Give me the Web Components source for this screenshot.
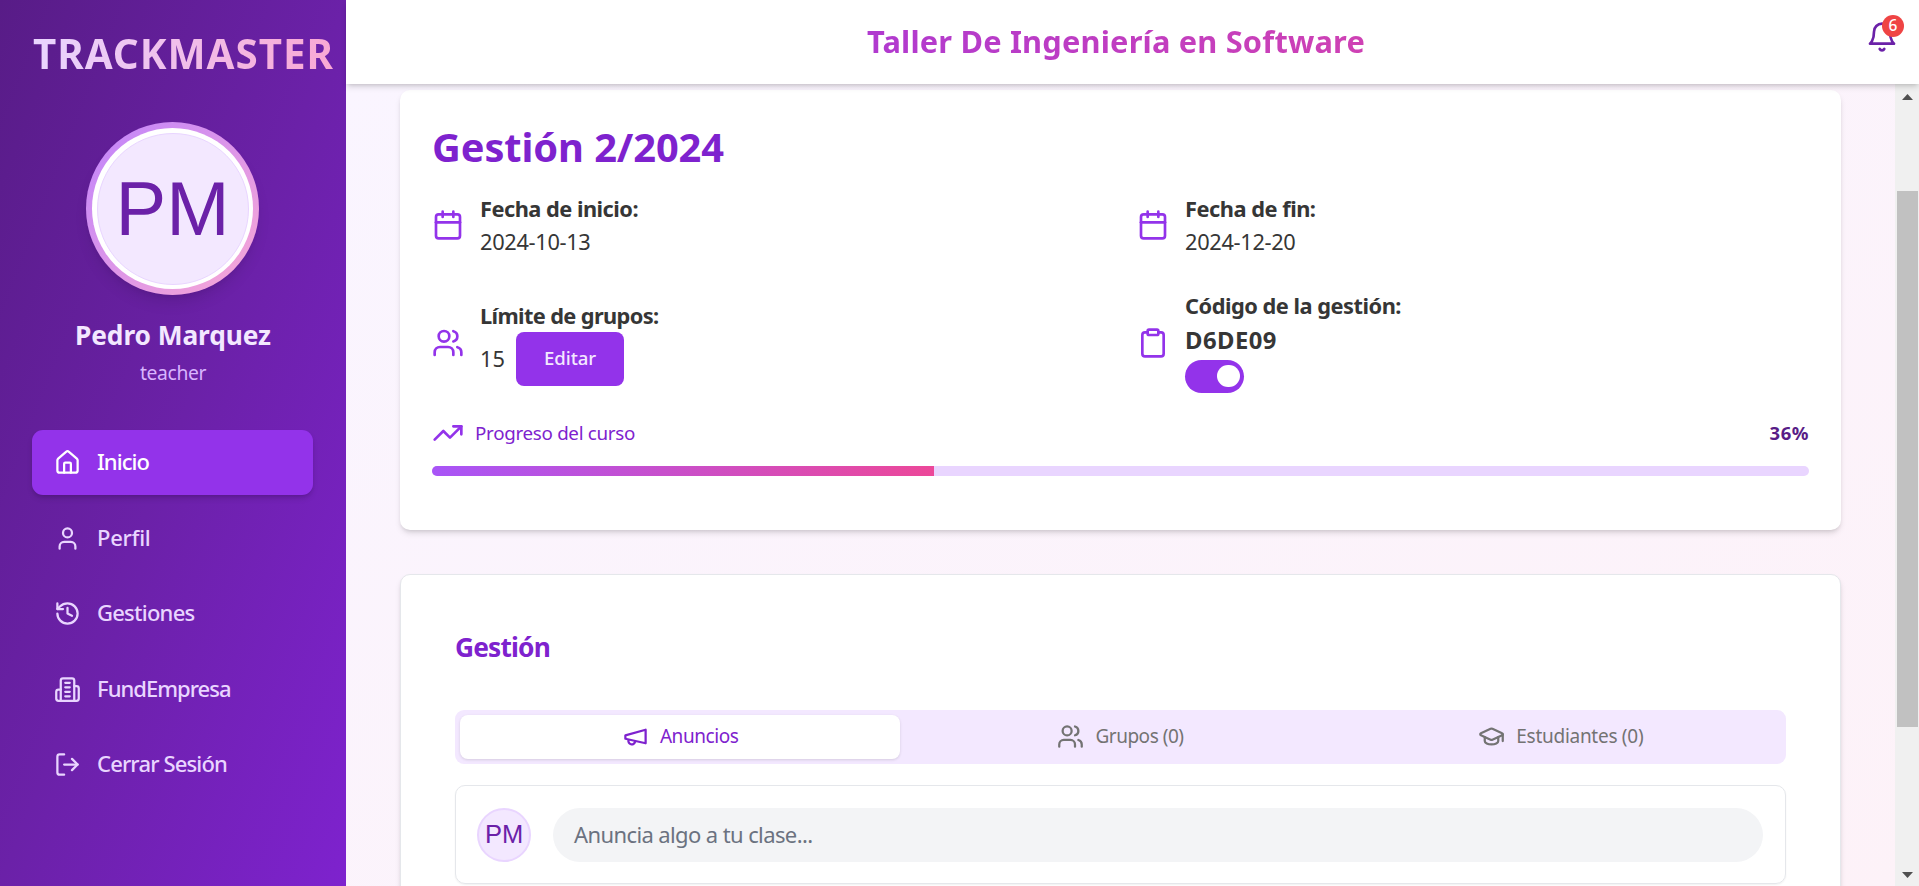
<!DOCTYPE html>
<html lang="es">
<head>
<meta charset="utf-8">
<title>TrackMaster</title>
<style>
html,body{margin:0;height:100%;overflow:hidden}
body{font-family:"Noto Sans","Open Sans",sans-serif;color:#363636}
</style>
</head>
<body>
<track-app></track-app>
<script>
const ICONS = {
  home:'<path d="M15 21v-8a1 1 0 0 0-1-1h-4a1 1 0 0 0-1 1v8"/><path d="M3 10a2 2 0 0 1 .709-1.528l7-5.999a2 2 0 0 1 2.582 0l7 5.999A2 2 0 0 1 21 10v9a2 2 0 0 1-2 2H5a2 2 0 0 1-2-2z"/>',
  user:'<path d="M19 21v-2a4 4 0 0 0-4-4H9a4 4 0 0 0-4 4v2"/><circle cx="12" cy="7" r="4"/>',
  history:'<path d="M3 12a9 9 0 1 0 9-9 9.75 9.75 0 0 0-6.74 2.74L3 8"/><path d="M3 3v5h5"/><path d="M12 7v5l4 2"/>',
  building:'<path d="M6 22V4a2 2 0 0 1 2-2h8a2 2 0 0 1 2 2v18Z"/><path d="M6 12H4a2 2 0 0 0-2 2v6a2 2 0 0 0 2 2h2"/><path d="M18 9h2a2 2 0 0 1 2 2v9a2 2 0 0 1-2 2h-2"/><path d="M10 6h4M10 10h4M10 14h4M10 18h4"/>',
  logout:'<path d="M9 21H5a2 2 0 0 1-2-2V5a2 2 0 0 1 2-2h4"/><path d="m16 17 5-5-5-5"/><path d="M21 12H9"/>',
  bell:'<path d="M6 8a6 6 0 0 1 12 0c0 7 3 9 3 9H3s3-2 3-9"/><path d="M10.3 21a1.94 1.94 0 0 0 3.4 0"/>',
  calendar:'<path d="M8 2v4M16 2v4"/><rect x="3" y="4" width="18" height="18" rx="2"/><path d="M3 10h18"/>',
  users:'<path d="M16 21v-2a4 4 0 0 0-4-4H6a4 4 0 0 0-4 4v2"/><circle cx="9" cy="7" r="4"/><path d="M22 21v-2a4 4 0 0 0-3-3.87"/><path d="M16 3.13a4 4 0 0 1 0 7.75"/>',
  clipboard:'<rect x="8" y="2" width="8" height="4" rx="1"/><path d="M16 4h2a2 2 0 0 1 2 2v14a2 2 0 0 1-2 2H6a2 2 0 0 1-2-2V6a2 2 0 0 1 2-2h2"/>',
  trend:'<path d="m22 7-8.5 8.5-5-5L2 17"/><path d="M16 7h6v6"/>',
  megaphone:'<path d="m3 11 18-5v12L3 14v-3z"/><path d="M11.6 16.8a3 3 0 1 1-5.8-1.6"/>',
  cap:'<path d="M21.42 10.922a1 1 0 0 0-.019-1.838L12.83 5.18a2 2 0 0 0-1.66 0L2.6 9.08a1 1 0 0 0 0 1.832l8.57 3.908a2 2 0 0 0 1.66 0z"/><path d="M22 10v6"/><path d="M6 12.5V16a6 3 0 0 0 12 0v-3.5"/>'
};

const define = (name, html, setup) => customElements.define(name, class extends HTMLElement {
  connectedCallback() {
    if (this.shadowRoot) return;
    const t = document.createElement('template');
    t.innerHTML = typeof html === 'function' ? html(this) : html;
    this.attachShadow({mode: 'open'}).append(t.content.cloneNode(true));
    if (setup) setup(this);
  }
});

define('ui-icon', el => `<style>:host{display:block;flex:none}svg{display:block}</style>
<svg width="${el.getAttribute('size')}" height="${el.getAttribute('size')}" viewBox="0 0 24 24" fill="none" stroke="currentColor" stroke-width="2" stroke-linecap="round" stroke-linejoin="round">${ICONS[el.getAttribute('name')]}</svg>`);

/* Tracks its text so that the line takes the width given in w. */
define('fit-text', `<style>:host{display:block;white-space:nowrap;flex:none}span{display:inline-block}</style><span><slot></slot></span>`, el => {
  const w = +el.getAttribute('w'), span = el.shadowRoot.querySelector('span');
  const n = el.textContent.length;
  const natural = span.getBoundingClientRect().width;
  span.style.letterSpacing = ((w - natural) / n).toFixed(3) + 'px';
  el.style.width = w + 'px';
});

define('user-avatar', `<style>
:host{display:flex;align-items:center;justify-content:center;box-sizing:border-box;border-radius:50%;background:#f3e8ff;border:1px solid #e9d5ff;color:#6b21a8;font-family:"Liberation Sans",Arial,sans-serif;line-height:1}
</style><slot></slot>`);

define('nav-item', `<style>
:host{display:flex;align-items:center;gap:16px;height:65px;padding-left:22px;border-radius:11px;color:#e9d5ff;font-size:22px;font-weight:500;line-height:63px}
:host([active]){background:#9333ea;color:#fff;box-shadow:0 4px 6px -1px rgba(0,0,0,.15),0 2px 4px -2px rgba(0,0,0,.15)}
::slotted(fit-text){height:65px}
</style><ui-icon size="27"></ui-icon><slot></slot>`, el => {
  const i = el.shadowRoot.querySelector('ui-icon');
  const n = document.createElement('ui-icon');
  n.setAttribute('size', '27'); n.setAttribute('name', el.getAttribute('icon'));
  i.replaceWith(n);
});

define('side-bar', `<style>
:host{display:flex;flex-direction:column;flex:none;width:346px;box-sizing:border-box;padding:30px 33px 0 32px;background:linear-gradient(to bottom right,#581c87,#6b21a8 50%,#7e22ce)}
.brand{margin-left:1px;font-size:40.4px;font-weight:700;line-height:48px;background:linear-gradient(to right,#e9d5ff,#f9a8d4);-webkit-background-clip:text;background-clip:text;color:transparent}
.ring{align-self:center;margin-top:44px;width:173px;height:173px;box-sizing:border-box;padding:6px;border-radius:50%;background:linear-gradient(to bottom right,#c084fc,#f9a8d4);box-shadow:0 10px 15px -3px rgba(0,0,0,.1),0 4px 6px -4px rgba(0,0,0,.1)}
.white{width:161px;height:161px;box-sizing:border-box;padding:4.5px;border-radius:50%;background:#fff}
user-avatar{width:152px;height:152px;font-size:76px}
.name{align-self:center;margin:22px 0 0 1px;font-size:26.3px;font-weight:700;line-height:36px;color:#f3e8ff}
.role{align-self:center;margin:6px 0 0 1px;font-size:19.3px;line-height:28px;color:#d8b4fe}
nav{display:flex;flex-direction:column;gap:10.5px;margin-top:43px}
</style>
<fit-text class="brand" w="301">TRACKMASTER</fit-text>
<div class="ring"><div class="white"><user-avatar>PM</user-avatar></div></div>
<fit-text class="name" w="196">Pedro Marquez</fit-text>
<fit-text class="role" w="66">teacher</fit-text>
<nav>
<nav-item icon="home" active><fit-text w="52">Inicio</fit-text></nav-item>
<nav-item icon="user"><fit-text w="53.5">Perfil</fit-text></nav-item>
<nav-item icon="history"><fit-text w="97.5">Gestiones</fit-text></nav-item>
<nav-item icon="building"><fit-text w="133.5">FundEmpresa</fit-text></nav-item>
<nav-item icon="logout"><fit-text w="130">Cerrar Sesión</fit-text></nav-item>
</nav>`);

define('top-bar', `<style>
:host{display:flex;flex:none;height:84px;box-sizing:border-box;padding:0 21px 0 36px;background:#fff;position:relative;z-index:2;box-shadow:0 4px 6px -1px rgba(0,0,0,.14),0 2px 4px -2px rgba(0,0,0,.14)}
.title{flex:1;display:flex;justify-content:center;font-size:30.8px;font-weight:700;line-height:82px;background:linear-gradient(to right,#9333ea,#ec4899);-webkit-background-clip:text;background-clip:text;color:transparent}
.bell{position:relative;margin:21px 0 0 16px;height:32px;color:#6b21a8}
.badge{position:absolute;left:16px;top:-6px;width:22px;height:22px;border-radius:50%;background:#ef4444;color:#fff;font-size:15.5px;font-weight:500;line-height:21.5px;text-align:center}
</style>
<div class="title"><fit-text w="498">Taller De Ingeniería en Software</fit-text></div>
<div class="bell"><ui-icon size="32" name="bell"></ui-icon><span class="badge">6</span></div>`);

define('scroll-rail', `<style>
:host{display:flex;flex-direction:column;flex:none;width:24px;box-sizing:border-box;background:#f0f0f0;padding:10px 1px 8px 2px}
svg{display:block;margin-left:5px;flex:none}
.thumb{height:536px;margin-top:91px;background:#c1c1c1}
.gap{flex:1}
</style>
<svg width="11" height="6"><path d="M5.5 0L11 6H0z" fill="#505050"/></svg>
<div class="thumb"></div><div class="gap"></div>
<svg width="11" height="6"><path d="M5.5 6L11 0H0z" fill="#505050"/></svg>`);

define('info-item', el => `<style>
:host{display:flex;align-items:center;gap:16px;font-size:21.8px;line-height:32.5px}
ui-icon{color:#9333ea}
.body{margin-top:1px}
:host([low]) ui-icon{margin-top:2px}
</style><ui-icon size="32" name="${el.getAttribute('icon')}"></ui-icon><div class="body"><slot></slot></div>`);

define('toggle-switch', `<style>
:host{display:flex;align-items:center;justify-content:flex-end;box-sizing:border-box;width:59px;height:33px;padding-right:4.5px;border-radius:17px;background:#9333ea}
i{width:22.5px;height:22.5px;border-radius:50%;background:#fff}
</style><i></i>`);

define('course-card', `<style>
:host{display:block;height:440px;box-sizing:border-box;padding:32px;border-radius:10px;background:#fff;box-shadow:0 4px 6px -1px rgba(0,0,0,.13),0 2px 4px -2px rgba(0,0,0,.13)}
.title{margin-top:1px;font-size:39.8px;font-weight:700;line-height:48px;color:#7e22ce}
.grid{display:grid;grid-template-columns:1fr 1fr;column-gap:33px;row-gap:31px;margin-top:21px}
b{display:block;font-weight:700}
.row{display:flex;align-items:center;gap:11px}
button{margin:0;border:0;width:108px;height:54px;padding:0;display:flex;justify-content:center;border-radius:8px;background:#9333ea;color:#f3e8ff;font:500 18.6px/51px "Noto Sans",sans-serif}
.code{font-size:23.8px;font-weight:700;line-height:35px}
toggle-switch{margin:2px 0 3px}
.progress{display:flex;align-items:center;gap:11px;margin-top:21px;height:32px;font-size:18.8px;line-height:30px;color:#7e22ce}
.progress ui-icon{color:#9333ea}
.pct{margin-left:auto;font-size:18.5px;font-weight:700;color:#581c87}
.bar{height:10px;margin-top:17px;border-radius:5px;background:#e9d5ff;overflow:hidden}
.bar div{height:10px;width:502px;background:linear-gradient(to right,#a855f7,#ec4899)}
</style>
<fit-text class="title" w="292">Gestión 2/2024</fit-text>
<div class="grid">
<info-item icon="calendar"><b><fit-text w="158">Fecha de inicio:</fit-text></b><fit-text w="110.5">2024-10-13</fit-text></info-item>
<info-item icon="calendar"><b><fit-text w="130.5">Fecha de fin:</fit-text></b><fit-text w="110.5">2024-12-20</fit-text></info-item>
<info-item icon="users" low><b><fit-text w="178.5">Límite de grupos:</fit-text></b><div class="row"><fit-text w="25">15</fit-text><button><fit-text w="52">Editar</fit-text></button></div></info-item>
<info-item icon="clipboard" low><b><fit-text w="216">Código de la gestión:</fit-text></b><fit-text class="code" w="92">D6DE09</fit-text><toggle-switch></toggle-switch></info-item>
</div>
<div class="progress"><ui-icon size="32" name="trend"></ui-icon><fit-text w="160">Progreso del curso</fit-text><fit-text class="pct" w="39.5">36%</fit-text></div>
<div class="bar"><div></div></div>`);

define('tab-item', el => `<style>
:host{flex:1;display:flex;align-items:center;justify-content:center;gap:11px;height:44px;border-radius:8px;color:#737373;font-size:19px;line-height:40px}
::slotted(fit-text){height:42px}
:host([active]){background:#fff;color:#7e22ce;box-shadow:0 1px 3px rgba(0,0,0,.12)}
</style><ui-icon size="27" name="${el.getAttribute('icon')}"></ui-icon><slot></slot>`, el => {
  el.shadowRoot.querySelector('ui-icon').style.marginTop = '-1px';
});

define('announce-box', `<style>
:host{display:flex;gap:22px;margin-top:21px;height:99px;box-sizing:border-box;padding:22px 22px 22px 21px;border:1px solid #e5e7eb;border-radius:10px;box-shadow:0 1px 2px rgba(0,0,0,.06)}
user-avatar{width:54px;height:54px;font-size:25.5px;flex:none;border-width:2px}
.input{flex:1;height:54px;box-sizing:border-box;padding-left:21px;border-radius:27px;background:#f3f4f6;color:#6b7280;font-size:22px;line-height:53px}
</style>
<user-avatar>PM</user-avatar><div class="input"><fit-text w="238.5">Anuncia algo a tu clase...</fit-text></div>`);

define('manage-card', `<style>
:host{display:block;height:420px;margin-top:44px;box-sizing:border-box;padding:54px 54px 0;border:1px solid #e5e7eb;border-radius:10px;background:#fff;box-shadow:0 4px 6px -1px rgba(0,0,0,.13),0 2px 4px -2px rgba(0,0,0,.13)}
.title{font-size:26.3px;font-weight:700;line-height:36px;color:#7e22ce}
.tabs{display:flex;margin-top:45px;height:54px;box-sizing:border-box;padding:5px;border-radius:9px;background:#f3e8ff}
</style>
<fit-text class="title" w="95">Gestión</fit-text>
<div class="tabs">
<tab-item icon="megaphone" active><fit-text w="78.5">Anuncios</fit-text></tab-item>
<tab-item icon="users"><fit-text w="88">Grupos (0)</fit-text></tab-item>
<tab-item icon="cap"><fit-text w="127">Estudiantes (0)</fit-text></tab-item>
</div>
<announce-box></announce-box>`);

define('track-app', `<style>
:host{display:flex;height:100vh;overflow:hidden}
.right{flex:1;min-width:0;display:flex;flex-direction:column}
.body{flex:1;min-height:0;display:flex}
main{flex:1;min-width:0;overflow:hidden;box-sizing:border-box;padding:6px 54px 0;background:linear-gradient(to bottom right,#faf5ff,#fdf2f8)}
</style>
<side-bar></side-bar>
<div class="right"><top-bar></top-bar>
<div class="body"><main><course-card></course-card><manage-card></manage-card></main><scroll-rail></scroll-rail></div></div>`);
</script>
</body>
</html>
